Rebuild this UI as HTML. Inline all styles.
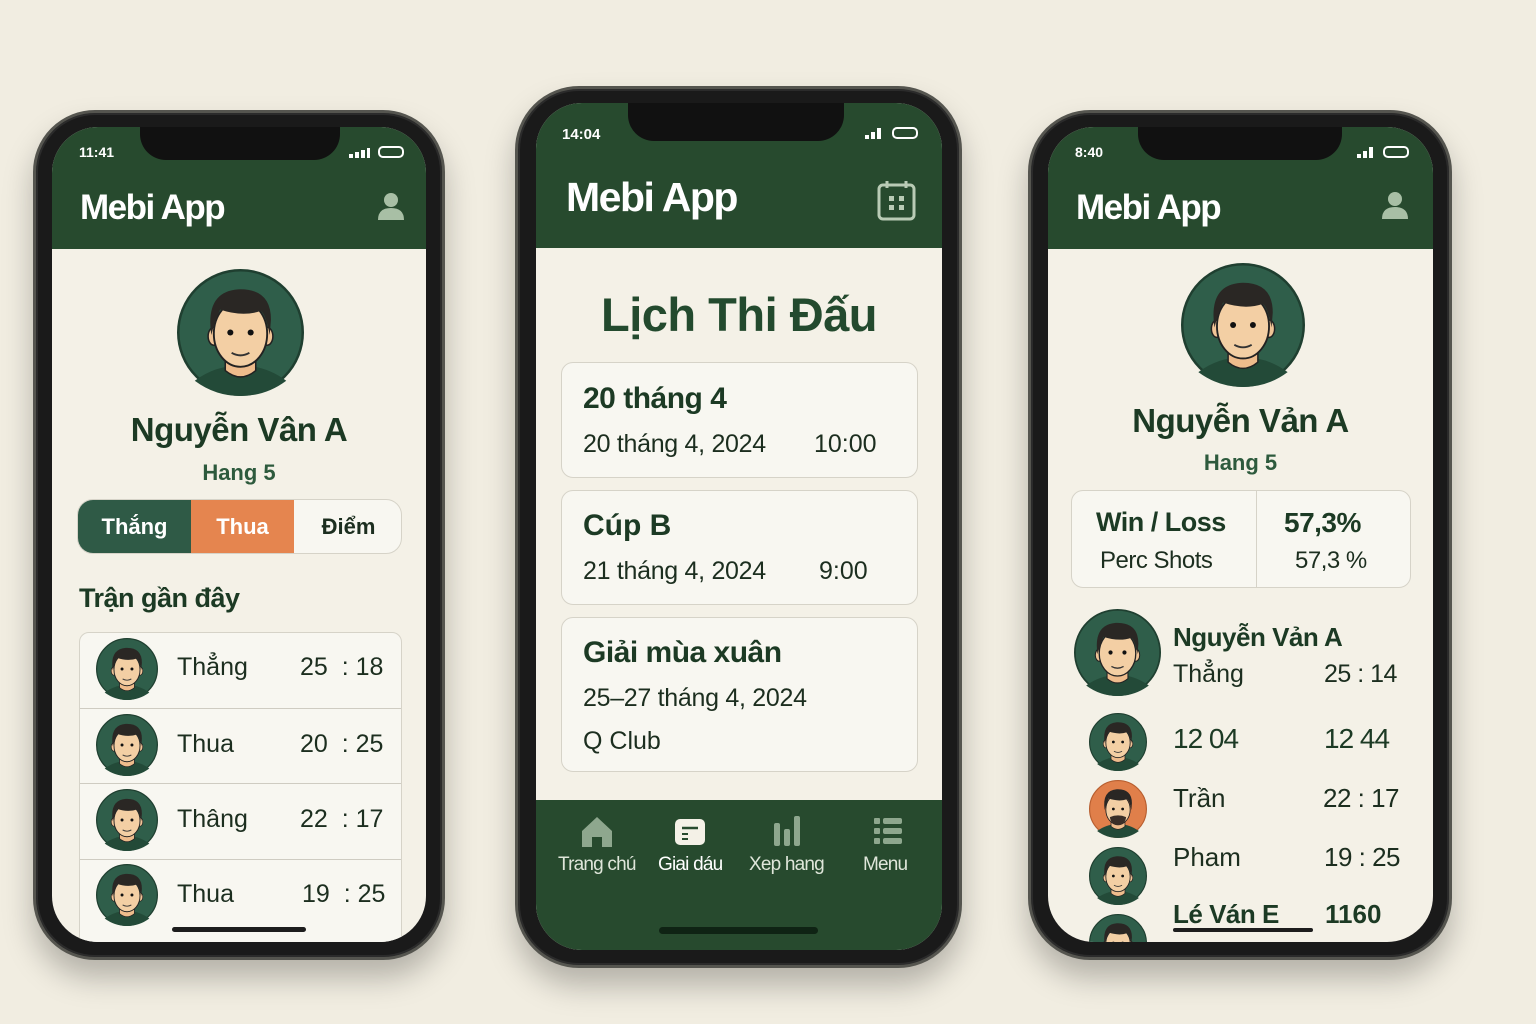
<!DOCTYPE html>
<html><head><meta charset="utf-8">
<style>
*{margin:0;padding:0;box-sizing:border-box}
body{width:1536px;height:1024px;background:#f1ede1;position:relative;overflow:hidden;font-family:"Liberation Sans","DejaVu Sans",sans-serif;color:#1c2e1f}
.a{position:absolute;white-space:nowrap}
.phone{position:absolute;background:#1a1a1a;border:3px solid #55554f;box-shadow:0 18px 30px rgba(0,0,0,.25),inset 0 0 0 2px #2b2b2b}
.screen{position:absolute;background:#f4f1e7;overflow:hidden}
.hdr{position:absolute;left:0;top:0;right:0;background:#274a2e}
.notch{position:absolute;background:#111;border-radius:0 0 26px 26px}
.w{color:#fff}
.card{position:absolute;background:#f8f7f1;border:1px solid #d6d3c8;border-radius:12px}
svg{position:absolute}
.dk{color:#1c3a24}
.clip{position:absolute;left:0;top:0;width:1536px;height:1024px}
</style></head><body>
<svg width="0" height="0" style="position:absolute">
<defs>
<symbol id="av" viewBox="0 0 100 100">
<circle cx="50" cy="50" r="49" fill="#2f5e4a" stroke="#1f3f30" stroke-width="2"/>
<path d="M14 88 Q30 76 50 76 Q70 76 86 88 Q70 100 50 100 Q30 100 14 88Z" fill="#234a38"/>
<path d="M38 66 L38 80 Q50 90 62 80 L62 66Z" fill="#eebc8c" stroke="#222" stroke-width="1.2"/>
<ellipse cx="29" cy="53" rx="4.5" ry="7" fill="#f0c496" stroke="#222" stroke-width="1.2"/>
<ellipse cx="71" cy="53" rx="4.5" ry="7" fill="#f0c496" stroke="#222" stroke-width="1.2"/>
<ellipse cx="50" cy="51" rx="21" ry="26" fill="#f3cfa4" stroke="#222" stroke-width="1.5"/>
<path d="M27 52 Q22 18 48 16 Q74 15 74 40 L73 52 Q70 36 66 33 Q52 38 34 32 Q30 40 27 52Z" fill="#2a2724"/>
<circle cx="42" cy="50" r="2.4" fill="#111"/><circle cx="58" cy="50" r="2.4" fill="#111"/>
<path d="M43 66 Q50 70 57 66" stroke="#333" stroke-width="1.5" fill="none"/>
</symbol>
<symbol id="avo" viewBox="0 0 100 100">
<circle cx="50" cy="50" r="49" fill="#e07f4a" stroke="#b85f30" stroke-width="2"/>
<path d="M14 88 Q30 76 50 76 Q70 76 86 88 Q70 100 50 100 Q30 100 14 88Z" fill="#234a38"/>
<path d="M38 66 L38 80 Q50 90 62 80 L62 66Z" fill="#eebc8c" stroke="#222" stroke-width="1.2"/>
<ellipse cx="50" cy="51" rx="21" ry="26" fill="#f3cfa4" stroke="#222" stroke-width="1.5"/>
<path d="M27 52 Q22 18 48 16 Q74 15 74 40 L73 52 Q70 36 66 33 Q52 38 34 32 Q30 40 27 52Z" fill="#2a2724"/>
<circle cx="42" cy="50" r="2.4" fill="#111"/><circle cx="58" cy="50" r="2.4" fill="#111"/>
<path d="M36 64 Q50 58 64 64 Q62 78 50 78 Q38 78 36 64Z" fill="#3a2f28"/>
</symbol>
</defs></svg>

<!-- PHONE 1 -->
<div class="phone" style="left:33px;top:110px;width:412px;height:850px;border-radius:62px"></div>
<div class="screen" style="left:52px;top:127px;width:374px;height:815px;border-radius:46px">
 <div class="hdr" style="height:122px"></div>
 <div class="notch" style="left:88px;top:0;width:200px;height:33px"></div>
</div>
<div class="a w" style="left:79px;top:144px;font-size:14px;font-weight:bold">11:41</div>
<svg style="left:349px;top:148px" width="22" height="10"><rect x="0" y="6" width="4" height="4" fill="#fff"/><rect x="6" y="4" width="4" height="6" fill="#fff"/><rect x="12" y="2" width="4" height="8" fill="#fff"/><rect x="18" y="0" width="3" height="10" fill="#fff"/></svg>
<div class="a" style="left:378px;top:146px;width:26px;height:12px;border:2px solid #fff;border-radius:5px"></div>
<div class="a w" style="left:80px;top:188px;font-size:35px;font-weight:bold;letter-spacing:-1.5px">Mebi App</div>
<svg style="left:377px;top:191px" width="28" height="30"><circle cx="14" cy="9" r="7" fill="#a8bfa5"/><path d="M1 29 Q1 17 14 17 Q27 17 27 29Z" fill="#a8bfa5"/></svg>
<svg style="left:177px;top:269px" width="127" height="127"><use href="#av"/></svg>
<div class="a dk" style="left:52px;width:374px;text-align:center;top:411px;font-size:33px;font-weight:bold;letter-spacing:-0.5px">Nguyễn Vân A</div>
<div class="a" style="left:52px;width:374px;text-align:center;top:460px;font-size:22px;font-weight:bold;color:#2d5a3d">Hang 5</div>
<div class="a" style="left:77px;top:499px;width:325px;height:55px;border-radius:16px;background:#f8f7f1;border:1px solid #d6d3c8;overflow:hidden">
 <div class="a w" style="left:0;top:0;width:113px;height:55px;background:#2f5a46;text-align:center;line-height:54px;font-size:22px;font-weight:bold">Thắng</div>
 <div class="a w" style="left:113px;top:0;width:103px;height:55px;background:#e5854f;text-align:center;line-height:54px;font-size:22px;font-weight:bold">Thua</div>
 <div class="a" style="left:216px;top:0;width:109px;height:55px;text-align:center;line-height:54px;font-size:22px;font-weight:bold;color:#1c2e1f">Điểm</div>
</div>
<div class="a dk" style="left:79px;top:583px;font-size:27px;font-weight:bold;letter-spacing:-0.5px">Trận gần đây</div>
<div class="clip" style="clip-path:inset(127px 1110px 82px 52px round 46px)">
<div class="card" style="left:79px;top:632px;width:323px;height:340px;border-radius:10px;overflow:hidden">
 <div style="position:absolute;left:0;right:0;top:75px;border-top:1px solid #cfccc2"></div>
 <div style="position:absolute;left:0;right:0;top:150px;border-top:1px solid #cfccc2"></div>
 <div style="position:absolute;left:0;right:0;top:226px;border-top:1px solid #cfccc2"></div>
</div>
<svg style="left:96px;top:638px" width="62" height="62"><use href="#av"/></svg>
<svg style="left:96px;top:714px" width="62" height="62"><use href="#av"/></svg>
<svg style="left:96px;top:789px" width="62" height="62"><use href="#av"/></svg>
<svg style="left:96px;top:864px" width="62" height="62"><use href="#av"/></svg>
<div class="a" style="left:177px;top:653px;font-size:25px">Thẳng</div><div class="a" style="left:300px;top:653px;font-size:25px">25 &nbsp;:&nbsp;18</div>
<div class="a" style="left:177px;top:730px;font-size:25px">Thua</div><div class="a" style="left:300px;top:730px;font-size:25px">20 &nbsp;:&nbsp;25</div>
<div class="a" style="left:177px;top:805px;font-size:25px">Thâng</div><div class="a" style="left:300px;top:805px;font-size:25px">22 &nbsp;:&nbsp;17</div>
<div class="a" style="left:177px;top:880px;font-size:25px">Thua</div><div class="a" style="left:302px;top:880px;font-size:25px">19 &nbsp;:&nbsp;25</div>
<div class="a" style="left:172px;top:927px;width:134px;height:5px;border-radius:3px;background:#1d1d1d"></div>
</div>

<!-- PHONE 2 -->
<div class="phone" style="left:515px;top:86px;width:447px;height:882px;border-radius:64px"></div>
<div class="screen" style="left:536px;top:103px;width:406px;height:847px;border-radius:46px">
 <div class="hdr" style="height:145px"></div>
 <div class="notch" style="left:92px;top:0;width:216px;height:38px"></div>
 <div style="position:absolute;left:0;right:0;top:697px;bottom:0;background:#274a2e"></div>
</div>
<div class="a w" style="left:562px;top:126px;font-size:15px;font-weight:bold">14:04</div>
<svg style="left:865px;top:128px" width="18" height="11"><rect x="0" y="7" width="4" height="4" fill="#fff"/><rect x="6" y="4" width="4" height="7" fill="#fff"/><rect x="12" y="0" width="4" height="11" fill="#fff"/></svg>
<div class="a" style="left:892px;top:127px;width:26px;height:12px;border:2px solid #fff;border-radius:5px"></div>
<div class="a w" style="left:566px;top:174px;font-size:41px;font-weight:bold;letter-spacing:-1.5px">Mebi App</div>
<svg style="left:877px;top:179px" width="40" height="42"><rect x="2" y="6" width="35" height="34" rx="4" fill="none" stroke="#b9cbb5" stroke-width="3"/><line x1="10" y1="2" x2="10" y2="9" stroke="#b9cbb5" stroke-width="3"/><line x1="29" y1="2" x2="29" y2="9" stroke="#b9cbb5" stroke-width="3"/><rect x="12" y="17" width="5" height="5" fill="#b9cbb5"/><rect x="22" y="17" width="5" height="5" fill="#b9cbb5"/><rect x="12" y="26" width="5" height="5" fill="#b9cbb5"/><rect x="22" y="26" width="5" height="5" fill="#b9cbb5"/></svg>
<div class="a" style="left:536px;width:406px;text-align:center;top:287px;font-size:47px;font-weight:bold;color:#234a2e;letter-spacing:-0.5px">Lịch Thi Đấu</div>
<div class="card" style="left:561px;top:362px;width:357px;height:116px"></div>
<div class="a dk" style="left:583px;top:382px;font-size:30px;font-weight:bold;letter-spacing:-0.5px">20 tháng 4</div>
<div class="a" style="left:583px;top:430px;font-size:25px;letter-spacing:-0.3px">20 tháng 4, 2024</div><div class="a" style="left:814px;top:430px;font-size:25px">10:00</div>
<div class="card" style="left:561px;top:490px;width:357px;height:115px"></div>
<div class="a dk" style="left:583px;top:509px;font-size:30px;font-weight:bold">Cúp B</div>
<div class="a" style="left:583px;top:557px;font-size:25px;letter-spacing:-0.3px">21 tháng 4, 2024</div><div class="a" style="left:819px;top:557px;font-size:25px">9:00</div>
<div class="card" style="left:561px;top:617px;width:357px;height:155px"></div>
<div class="a dk" style="left:583px;top:636px;font-size:30px;font-weight:bold;letter-spacing:-0.5px">Giải mùa xuân</div>
<div class="a" style="left:583px;top:684px;font-size:25px;letter-spacing:-0.3px">25–27 tháng 4, 2024</div>
<div class="a" style="left:583px;top:727px;font-size:25px">Q Club</div>
<svg style="left:580px;top:815px" width="34" height="34"><path d="M2 16 L17 2 L32 16 L32 32 L22 32 L22 22 L12 22 L12 32 L2 32Z" fill="#8ea78e"/></svg>
<svg style="left:674px;top:818px" width="32" height="28"><rect x="1" y="1" width="30" height="26" rx="5" fill="#f4f1e7"/><line x1="8" y1="10" x2="24" y2="10" stroke="#274a2e" stroke-width="2.5"/><line x1="8" y1="16" x2="14" y2="16" stroke="#274a2e" stroke-width="2"/><line x1="8" y1="21" x2="14" y2="21" stroke="#274a2e" stroke-width="2"/></svg>
<svg style="left:773px;top:815px" width="30" height="32"><rect x="1" y="8" width="6" height="23" rx="2" fill="#8ea78e"/><rect x="11" y="14" width="6" height="17" rx="2" fill="#8ea78e"/><rect x="21" y="1" width="6" height="30" rx="2" fill="#8ea78e"/></svg>
<svg style="left:874px;top:818px" width="28" height="28"><g fill="#8ea78e"><rect x="0" y="0" width="6" height="6" rx="1"/><rect x="9" y="0" width="19" height="6" rx="2"/><rect x="0" y="10" width="6" height="6" rx="1"/><rect x="9" y="10" width="19" height="6" rx="2"/><rect x="0" y="20" width="6" height="6" rx="1"/><rect x="9" y="20" width="19" height="6" rx="2"/></g></svg>
<div class="a" style="left:558px;top:854px;font-size:19px;color:#dfe6da;letter-spacing:-0.8px">Trang chú</div>
<div class="a" style="left:658px;top:854px;font-size:19px;color:#fff;letter-spacing:-0.8px">Giai dáu</div>
<div class="a" style="left:749px;top:854px;font-size:19px;color:#dfe6da;letter-spacing:-0.8px">Xep hang</div>
<div class="a" style="left:863px;top:854px;font-size:19px;color:#dfe6da;letter-spacing:-0.8px">Menu</div>
<div class="a" style="left:659px;top:927px;width:159px;height:7px;border-radius:4px;background:#0f2314"></div>

<!-- PHONE 3 -->
<div class="phone" style="left:1028px;top:110px;width:424px;height:850px;border-radius:62px"></div>
<div class="screen" style="left:1048px;top:127px;width:385px;height:815px;border-radius:46px">
 <div class="hdr" style="height:122px"></div>
 <div class="notch" style="left:90px;top:0;width:204px;height:33px"></div>
</div>
<div class="a w" style="left:1075px;top:144px;font-size:14px;font-weight:bold">8:40</div>
<svg style="left:1357px;top:147px" width="18" height="11"><rect x="0" y="7" width="4" height="4" fill="#fff"/><rect x="6" y="4" width="4" height="7" fill="#fff"/><rect x="12" y="0" width="4" height="11" fill="#fff"/></svg>
<div class="a" style="left:1383px;top:146px;width:26px;height:12px;border:2px solid #fff;border-radius:5px"></div>
<div class="a w" style="left:1076px;top:188px;font-size:35px;font-weight:bold;letter-spacing:-1.5px">Mebi App</div>
<svg style="left:1381px;top:190px" width="28" height="30"><circle cx="14" cy="9" r="7" fill="#a8bfa5"/><path d="M1 29 Q1 17 14 17 Q27 17 27 29Z" fill="#a8bfa5"/></svg>
<svg style="left:1181px;top:263px" width="124" height="124"><use href="#av"/></svg>
<div class="a dk" style="left:1048px;width:385px;text-align:center;top:402px;font-size:33px;font-weight:bold;letter-spacing:-0.5px">Nguyễn Vản A</div>
<div class="a" style="left:1048px;width:385px;text-align:center;top:450px;font-size:22px;font-weight:bold;color:#2d5a3d">Hang 5</div>
<div class="card" style="left:1071px;top:490px;width:340px;height:98px"></div>
<div class="a" style="left:1256px;top:491px;height:96px;border-left:1px solid #d6d3c8"></div>
<div class="a dk" style="left:1096px;top:507px;font-size:27px;font-weight:bold;letter-spacing:-0.5px">Win / Loss</div>
<div class="a" style="left:1100px;top:547px;font-size:24px;letter-spacing:-0.5px">Perc Shots</div>
<div class="a dk" style="left:1284px;top:507px;font-size:28px;font-weight:bold;letter-spacing:-0.5px">57,3%</div>
<div class="a" style="left:1295px;top:547px;font-size:24px;letter-spacing:-0.5px">57,3 %</div>
<svg style="left:1074px;top:609px" width="87" height="87"><use href="#av"/></svg>
<div class="a dk" style="left:1173px;top:622px;font-size:26px;font-weight:bold;letter-spacing:-0.5px">Nguyễn Vản A</div>
<div class="a" style="left:1173px;top:660px;font-size:25px">Thẳng</div><div class="a" style="left:1324px;top:660px;font-size:25px;letter-spacing:-0.5px">25 : 14</div>
<div class="clip" style="clip-path:inset(127px 103px 82px 1048px round 46px)">
<svg style="left:1089px;top:713px" width="58" height="58"><use href="#av"/></svg>
<div class="a dk" style="left:1173px;top:723px;font-size:28px;letter-spacing:-1px">12 04</div><div class="a dk" style="left:1324px;top:723px;font-size:28px;letter-spacing:-1px">12 44</div>
<svg style="left:1089px;top:780px" width="58" height="58"><use href="#avo"/></svg>
<div class="a" style="left:1173px;top:783px;font-size:26px">Trần</div><div class="a" style="left:1323px;top:783px;font-size:26px;letter-spacing:-0.5px">22 : 17</div>
<svg style="left:1089px;top:847px" width="58" height="58"><use href="#av"/></svg>
<div class="a" style="left:1173px;top:842px;font-size:26px">Pham</div><div class="a" style="left:1324px;top:842px;font-size:26px;letter-spacing:-0.5px">19 : 25</div>
<svg style="left:1089px;top:914px" width="58" height="58"><use href="#av"/></svg>
<div class="a dk" style="left:1173px;top:899px;font-size:26px;font-weight:bold;letter-spacing:-0.5px">Lé Ván E</div><div class="a dk" style="left:1325px;top:899px;font-size:26px;font-weight:bold">1160</div>
<div class="a" style="left:1173px;top:928px;width:140px;height:4px;border-radius:2px;background:#1d1d1d"></div>
</div>
</body></html>
